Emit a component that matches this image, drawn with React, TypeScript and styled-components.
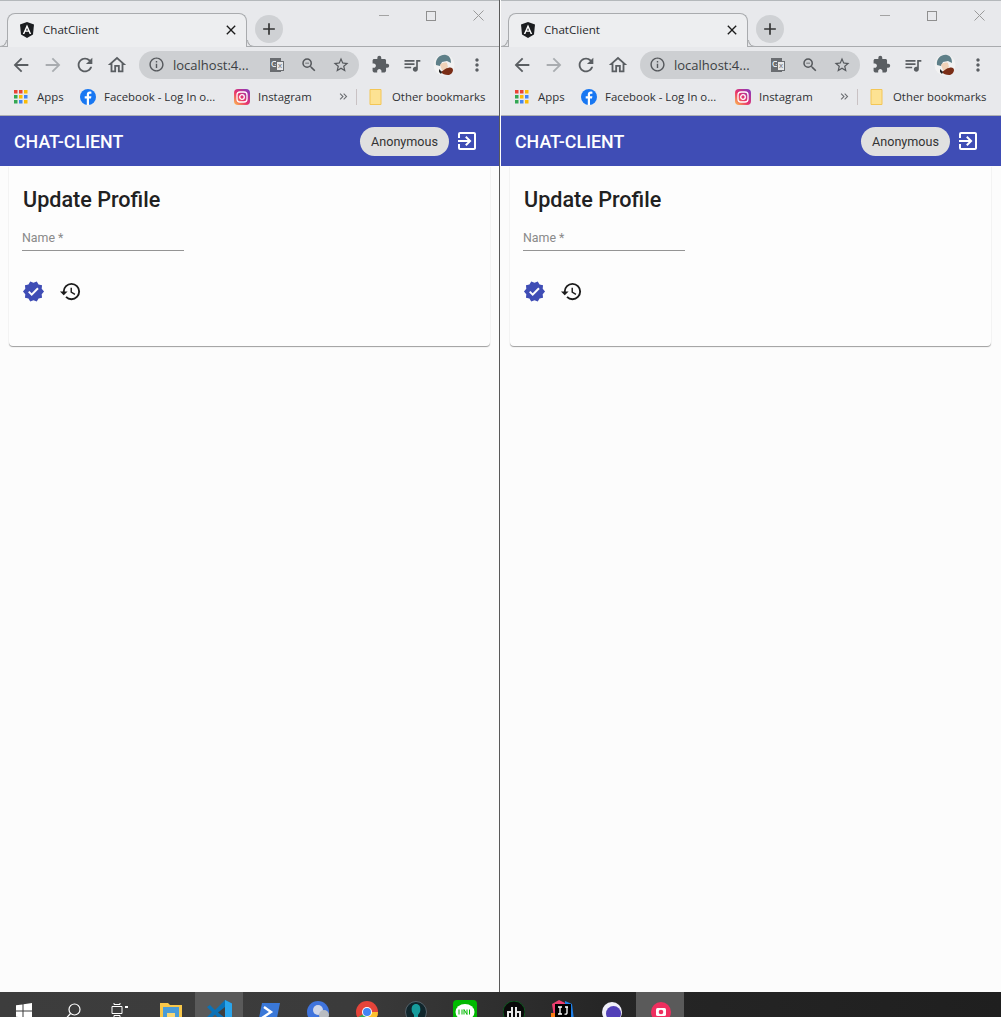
import React from 'react'
import styled, { createGlobalStyle } from 'styled-components'
import {
  MdArrowBack, MdArrowForward, MdRefresh, MdOutlineHome, MdInfoOutline, MdOutlineZoomOut,
  MdStarBorder, MdExtension, MdQueueMusic, MdMoreVert, MdExitToApp, MdVerified, MdHistory,
  MdClose, MdAdd, MdKeyboardDoubleArrowRight,
} from 'react-icons/md'

const chromeBg = '#e8e9ec'

const GlobalStyle = createGlobalStyle`
  html, body { margin: 0; padding: 0; background: #fafafa; }
  body { font-family: Roboto, "Liberation Sans", sans-serif; overflow: hidden; }
`

const Page = styled.div`
  width: 1001px;
  height: 1017px;
  display: flex;
  flex-direction: column;
  overflow: hidden;
`
const Windows = styled.div`
  display: flex;
  height: 992px;
`
const Window = styled.div<{ $first?: boolean }>`
  width: ${p => (p.$first ? 500 : 501)}px;
  flex: none;
  display: flex;
  flex-direction: column;
  background: #fcfcfc;
  box-sizing: border-box;
  border-right: ${p => (p.$first ? '1px solid #5a5a5a' : 'none')};
  border-left: ${p => (p.$first ? 'none' : '1px solid #fcfcfc')};
`
const TabStrip = styled.div`
  height: 47px;
  box-sizing: border-box;
  border-top: 1px solid #b4b8bb;
  border-bottom: 1px solid #a9abae;
  background: ${chromeBg};
  display: flex;
  align-items: flex-end;
  padding-left: 7px;
  position: relative;
`
const Tab = styled.div`
  width: 240px;
  height: 34px;
  box-sizing: border-box;
  background: #edeef0;
  border: 1px solid #a9abae;
  border-bottom: none;
  border-radius: 8px 8px 0 0;
  display: flex;
  align-items: center;
  padding: 0 7px 2px 11px;
  gap: 8px;
  margin-bottom: -1px;
  position: relative;

  &::before, &::after {
    content: '';
    position: absolute;
    bottom: 0;
    width: 7px;
    height: 7px;
    box-sizing: border-box;
    border-bottom: 1px solid #a9abae;
  }
  &::before {
    left: -8px;
    border-right: 1px solid #a9abae;
    border-bottom-right-radius: 7px;
    background: ${chromeBg};
  }
  &::after {
    right: -8px;
    border-left: 1px solid #a9abae;
    border-bottom-left-radius: 7px;
    background: ${chromeBg};
  }
`
const TabTitle = styled.span`
  flex: 1;
  font-family: "Open Sans", "Noto Sans", sans-serif;
  font-size: 11.6px;
  color: #27292c;
`
const NewTab = styled.div`
  width: 28px;
  height: 28px;
  border-radius: 50%;
  background: #cfd1d4;
  color: #333;
  display: flex;
  align-items: center;
  justify-content: center;
  font-size: 20px;
  margin: 0 0 3px 8px;
`
const WindowControls = styled.div`
  position: absolute;
  top: 9px;
  left: 379px;
  display: flex;
  gap: 37px;
  align-items: center;
`
const ToolBar = styled.div`
  height: 37px;
  box-sizing: border-box;
  background: ${chromeBg};
  display: flex;
  align-items: center;
  padding: 0 0 2px 10px;
  color: #5f6368;
`
const NavIcon = styled.div<{ $dim?: boolean; $gap?: number }>`
  width: 22px;
  height: 22px;
  margin-right: ${p => p.$gap ?? 10}px;
  font-size: 22px;
  display: flex;
  align-items: center;
  justify-content: center;
  color: ${p => (p.$dim ? '#a9acb0' : '#5a5e62')};
  flex: none;
`
const Omnibox = styled.div`
  width: 220px;
  height: 28px;
  border-radius: 14px;
  background: #cdcfd2;
  display: flex;
  align-items: center;
  padding: 0 9px 0 9px;
  box-sizing: border-box;
  margin: 0 10px 0 1px;
  flex: none;
  color: #55585c;
`
const Url = styled.span`
  font-family: "Open Sans", "Noto Sans", sans-serif;
  font-size: 13px;
  color: #3c3f43;
  margin-left: 8px;
  flex: 1;
`
const Translate = styled.div`
  width: 11px;
  height: 14px;
  background: #6a6d71;
  color: #fff;
  font-size: 9px;
  line-height: 12px;
  text-align: left;
  padding-left: 1px;
  box-sizing: border-box;
  position: relative;
  margin-right: 5px;
  font-family: "Liberation Sans", sans-serif;
  &::after {
    content: 'x';
    position: absolute;
    left: 6px;
    top: 3px;
    width: 8px;
    height: 10px;
    line-height: 8px;
    text-align: center;
    background: #e6e7e9;
    border: 1px solid #6a6d71;
    color: #6a6d71;
    font-size: 8px;
    box-sizing: border-box;
  }
`
const OmniIcon = styled.div`
  font-size: 18px;
  display: flex;
  margin-left: 14px;
`
const Avatar = styled.div`
  width: 22px;
  height: 22px;
  margin: 0 11px 0 2px;
  flex: none;
`
const Bookmarks = styled.div`
  height: 32px;
  box-sizing: border-box;
  background: ${chromeBg};
  border-bottom: 1px solid #aeb0b3;
  display: flex;
  align-items: center;
  padding: 0 0 6px 14px;
  font-family: "Open Sans", "Noto Sans", sans-serif;
  font-size: 11.4px;
  color: #2e3033;
`
const Mark = styled.div<{ $w: number; $gap?: number }>`
  width: ${p => p.$w}px;
  flex: none;
  display: flex;
  align-items: center;
  gap: ${p => p.$gap ?? 8}px;
  white-space: nowrap;
`
const BarGap = styled.div`
  width: 1px;
  height: 16px;
  background: #c9c2c4;
  margin: 0 12px 0 6px;
  flex: none;
`
const AppToolbar = styled.div`
  height: 50px;
  background: #3f4db5;
  color: #fff;
  display: flex;
  align-items: center;
  padding: 0 0 0 14px;
  flex: none;
`
const Brand = styled.div`
  width: 346px;
  font-size: 17.8px;
  font-weight: 500;
`
const UserChip = styled.div`
  height: 29px;
  width: 89px;
  border-radius: 15px;
  background: #e0e0e0;
  color: #333;
  font-size: 12.6px;
  font-weight: 400;
  display: flex;
  align-items: center;
  justify-content: center;
`
const ExitButton = styled.div`
  font-size: 24px;
  display: flex;
  margin-left: 6px;
`
const Card = styled.div`
  margin-left: 9px;
  width: 481px;
  height: 180px;
  box-sizing: border-box;
  background: #fdfdfd;
  border-radius: 0 0 4px 4px;
  box-shadow: 0 1px 1px rgba(0, 0, 0, 0.38);
  padding: 20px 14px 0 14px;
`
const Title = styled.h2`
  margin: 0;
  font-size: 21.6px;
  line-height: 27px;
  font-weight: 500;
  color: #212121;
`
const Field = styled.div`
  width: 162px;
  margin-top: 18px;
  height: 20px;
  box-sizing: border-box;
  border-bottom: 1px solid #949494;
  margin-left: -1px;
  font-size: 12.4px;
  line-height: 14px;
  color: #8a8a8a;
`
const Actions = styled.div`
  display: flex;
  align-items: center;
  gap: 14px;
  margin: 29px 0 0 -1px;
  font-size: 23px;
`
const ActionIcon = styled.div<{ $color: string }>`
  display: flex;
  color: ${p => p.$color};
`
const Taskbar = styled.div`
  height: 25px;
  background: linear-gradient(90deg, #3d3d3d 0%, #3b3b3b 35%, #262626 60%, #1f1f1f 100%);
  display: flex;
  overflow: hidden;
  flex: none;
  & > :first-child { margin-left: -1px; }
`
const TaskSlot = styled.div<{ $active?: boolean; $top: number; $shift?: number }>`
  width: 49px;
  height: 25px;
  flex: none;
  display: flex;
  justify-content: center;
  background: ${p => (p.$active ? 'linear-gradient(90deg,#5a5a5a 48px,transparent 48px)' : 'transparent')};
  & > svg { margin: ${p => p.$top}px 0 0 ${p => p.$shift ?? 0}px; flex: none; }
`

const AngularLogo = () => (
  <svg width="16" height="16" viewBox="0 0 16 16">
    <path d="M8 0 1 2.500l1 10L8 16l6-3.500 1-10z" fill="#1b1d20" />
    <path d="M8 2.500 3.800 12h1.600l.9-2.200h3.400l.9 2.200h1.600zM7 8.500l1-2.500 1 2.500z" fill="#fff" />
  </svg>
)
const AppsGrid = () => (
  <svg width="14" height="14" viewBox="0 0 14 14">
    {['#ea4335', '#ea4335', '#fbbc05', '#34a853', '#fbbc05', '#4285f4', '#34a853', '#4285f4', '#fbbc05'].map((c, i) => (
      <rect key={i} x={(i % 3) * 5} y={Math.floor(i / 3) * 5} width="3.500" height="3.500" fill={c} />
    ))}
  </svg>
)
const FacebookLogo = () => (
  <svg width="16" height="16" viewBox="0 0 16 16">
    <circle cx="8" cy="8" r="8" fill="#1877f2" />
    <path d="M9 16V9.500h2l.4-2.300H9V6c0-.8.300-1.200 1.200-1.200h1.200v-2C11 2.700 10.400 2.600 9.800 2.600 8 2.600 6.800 3.700 6.800 5.700v1.500H4.700v2.300h2.100V16z" fill="#fff" />
  </svg>
)
const InstagramLogo = ({ id }: { id: string }) => (
  <svg width="16" height="16" viewBox="0 0 16 16">
    <defs>
      <linearGradient id={id} x1="0" y1="1" x2="1" y2="0">
        <stop offset="0" stopColor="#fdc04f" />
        <stop offset=".45" stopColor="#e8336d" />
        <stop offset="1" stopColor="#7b3ac6" />
      </linearGradient>
    </defs>
    <rect width="16" height="16" rx="4" fill={`url(#${id})`} />
    <rect x="3" y="3" width="10" height="10" rx="3" fill="none" stroke="#fff" strokeWidth="1.300" />
    <circle cx="8" cy="8" r="2.300" fill="none" stroke="#fff" strokeWidth="1.300" />
  </svg>
)
const FolderMark = () => (
  <svg width="13" height="16" viewBox="0 0 13 16">
    <path d="M1 .5h11v15H1z" fill="#fde293" stroke="#f3c656" />
  </svg>
)
const ProfilePic = () => (
  <svg width="22" height="22" viewBox="0 0 22 22">
    <circle cx="11" cy="11" r="10.500" fill="#f2f2f2" />
    <path d="M3 11C2 4 8 0 13 1c4 1 5 4 5 8l-4-2-5 1-2 4z" fill="#5e7f88" />
    <path d="M7 11c1-2 5-3 7-2l1 4-3 4-3-1z" fill="#f0d2b8" />
    <path d="M8 18c3-2 5-4 7-4 3-1 5 0 5 2 0 3-3 5-5 5-3 0-6-1-7-3z" fill="#7a2d16" />
    <path d="M6 15l3 3-1 2-2-2z" fill="#222" />
  </svg>
)

const BrowserWindow = ({ first }: { first?: boolean }) => (
  <Window $first={first}>
    <TabStrip>
      <Tab>
        <AngularLogo />
        <TabTitle>ChatClient</TabTitle>
        <MdClose size={16} color="#1c1c1c" />
      </Tab>
      <NewTab><MdAdd /></NewTab>
      <WindowControls>
        <svg width="10" height="11" viewBox="0 0 10 11"><path d="M0 5.500h10" stroke="#a3a3a3" /></svg>
        <svg width="10" height="10" viewBox="0 0 10 10"><rect x=".5" y=".5" width="9" height="9" fill="none" stroke="#8f8f8f" /></svg>
        <svg width="11" height="11" viewBox="0 0 11 11"><path d="M.5.500l10 10M10.500.500l-10 10" stroke="#9a9a9a" /></svg>
      </WindowControls>
    </TabStrip>
    <ToolBar>
      <NavIcon><MdArrowBack /></NavIcon>
      <NavIcon $dim><MdArrowForward /></NavIcon>
      <NavIcon><MdRefresh /></NavIcon>
      <NavIcon><MdOutlineHome /></NavIcon>
      <Omnibox>
        <MdInfoOutline size={17} />
        <Url>localhost:4...</Url>
        <Translate>G</Translate>
        <OmniIcon><MdOutlineZoomOut /></OmniIcon>
        <OmniIcon><MdStarBorder /></OmniIcon>
      </Omnibox>
      <NavIcon $gap={10}><MdExtension size={19} /></NavIcon>
      <NavIcon $gap={8}><MdQueueMusic size={20} /></NavIcon>
      <Avatar><ProfilePic /></Avatar>
      <NavIcon $gap={0}><MdMoreVert size={20} /></NavIcon>
    </ToolBar>
    <Bookmarks>
      <Mark $w={66} $gap={9}><AppsGrid /><span>Apps</span></Mark>
      <Mark $w={154}><FacebookLogo /><span>Facebook - Log In o...</span></Mark>
      <Mark $w={103}><InstagramLogo id={first ? 'ig-left' : 'ig-right'} /><span>Instagram</span></Mark>
      <MdKeyboardDoubleArrowRight size={13} color="#6a6d71" />
      <BarGap />
      <Mark $w={120} $gap={10}><FolderMark /><span>Other bookmarks</span></Mark>
    </Bookmarks>
    <AppToolbar>
      <Brand>CHAT-CLIENT</Brand>
      <UserChip>Anonymous</UserChip>
      <ExitButton><MdExitToApp /></ExitButton>
    </AppToolbar>
    <Card>
      <Title>Update Profile</Title>
      <Field>Name *</Field>
      <Actions>
        <ActionIcon $color="#3f4db5"><MdVerified /></ActionIcon>
        <ActionIcon $color="#1c1c1c"><MdHistory /></ActionIcon>
      </Actions>
    </Card>
  </Window>
)

const taskIcons = [
  { top: 11, icon: <svg width="16" height="16" viewBox="0 0 16 16"><path d="M0 2.300 6.500 1.400V7.500H0zM7.500 1.300 16 0v7.500H7.500zM0 8.500h6.500v6L0 13.700zM7.500 8.500H16V16l-8.500-1.200z" fill="#fff" /></svg> },
  { top: 11, icon: <svg width="16" height="16" viewBox="0 0 16 16"><circle cx="9.500" cy="6.500" r="5.500" fill="none" stroke="#fff" strokeWidth="1.200" /><path d="M5.500 10.500 1 15.500" stroke="#fff" strokeWidth="1.200" /></svg> },
  { top: 11, shift: -4, icon: <svg width="17" height="14" viewBox="0 0 17 14"><path d="M1 3.500h10v7H1zM3 0v1.500h6V0M3 14v-1.500h6V14" fill="none" stroke="#fff" /><path d="M14 3h3v2h-3z" fill="#fff" /></svg> },
  { top: 10, icon: <svg width="22" height="22" viewBox="0 0 22 22"><path d="M0 1h8l2 2h12v19H0z" fill="#f8c749" /><path d="M3 5h16v17H3z" fill="#4a9cd8" /><path d="M7 11h8v5H7z" fill="#f8d775" /></svg> },
  { top: 8, icon: <svg width="25" height="25" viewBox="0 0 25 25"><path d="M18 0 25 3.500V21l-7 4L8 14.500 3 19 0 17l5-5L0 7l3-2 5 5z" fill="#0a72b8" /><path d="M18 0 25 3.500V21l-7 4z" fill="#2aa5ec" /><path d="M18 7v11l-7-5.500z" fill="#3f3f3f" /></svg> },
  { top: 11, icon: <svg width="22" height="22" viewBox="0 0 22 22"><path d="M4 0h18l-4 20H0z" fill="#3a78d8" /><path d="M6 4l7 5-9 6" fill="none" stroke="#fff" strokeWidth="2.400" /></svg> },
  { top: 9, icon: <svg width="22" height="22" viewBox="0 0 22 22"><circle cx="11" cy="11" r="11" fill="#3f74dd" /><circle cx="11" cy="9" r="5" fill="#cfd6e8" /><circle cx="17" cy="14" r="5" fill="#b9bcc0" /></svg> },
  { top: 9, icon: <svg width="22" height="22" viewBox="0 0 22 22"><circle cx="11" cy="11" r="11" fill="#e5443a" /><path d="M11 11 1.500 16.500A11 11 0 0 0 11 22z" fill="#34a853" /><path d="M11 11h11a11 11 0 0 1-11 11z" fill="#fbc02d" /><circle cx="11" cy="11" r="5" fill="#fff" /><circle cx="11" cy="11" r="4" fill="#4285f4" /></svg> },
  { top: 9, icon: <svg width="22" height="22" viewBox="0 0 22 22"><circle cx="11" cy="11" r="10.500" fill="#10262c" stroke="#55616a" /><path d="M11 3c4 0 5 4 4 8l-2 3v6H9v-6l-2-3C6 7 7 3 11 3z" fill="#169c9c" /></svg> },
  { top: 8, icon: <svg width="24" height="24" viewBox="0 0 24 24"><rect width="24" height="24" rx="4" fill="#00b900" /><ellipse cx="12" cy="12" rx="9.500" ry="8" fill="#fff" /><path d="M6 9.500v5M9 9.500v5M11 14.500v-5l3 5v-5M16.500 9.500v5" stroke="#00b900" strokeWidth="1" fill="none" /></svg> },
  { top: 9, icon: <svg width="22" height="22" viewBox="0 0 22 22"><circle cx="11" cy="11" r="11" fill="#0a0a0a" stroke="#0f5a20" /><path d="M9 6v11H5v-6h4M13 6v11h4v-6h-4" fill="none" stroke="#e8e8e8" strokeWidth="2" /></svg> },
  { top: 8, icon: <svg width="24" height="24" viewBox="0 0 24 24"><path d="M1 4 8 0l6 3-2 10-9 4z" fill="#ef3d6e" /><path d="M14 1l7 3 2 16H14z" fill="#1d7fe8" /><path d="M0 13h5v8H0z" fill="#f97a12" /><rect x="4" y="4" width="16" height="16" fill="#000" /><path d="M7 7h4M9 7v7M7 14h4M14 7h3M16 7v6c0 1-1 1.500-2.500 1" stroke="#fff" fill="none" strokeWidth="1.300" /></svg> },
  { top: 10, icon: <svg width="20" height="20" viewBox="0 0 20 20"><circle cx="10" cy="10" r="10" fill="#f1f0fa" /><circle cx="11.500" cy="11.500" r="7.500" fill="#5240b8" /></svg> },
  { top: 10, icon: <svg width="20" height="20" viewBox="0 0 20 20"><circle cx="10" cy="10" r="10" fill="#ef2f5f" /><rect x="5" y="6" width="10" height="8" rx="1.500" fill="#fff" /><circle cx="10" cy="10" r="2.300" fill="#ef2f5f" /></svg> },
]

const App = () => (
  <Page>
    <GlobalStyle />
    <Windows>
      <BrowserWindow first />
      <BrowserWindow />
    </Windows>
    <Taskbar>
      {taskIcons.map((t, i) => (
        <TaskSlot key={i} $top={t.top} $shift={t.shift} $active={i === 4 || i === 13}>{t.icon}</TaskSlot>
      ))}
    </Taskbar>
  </Page>
)

export default App
